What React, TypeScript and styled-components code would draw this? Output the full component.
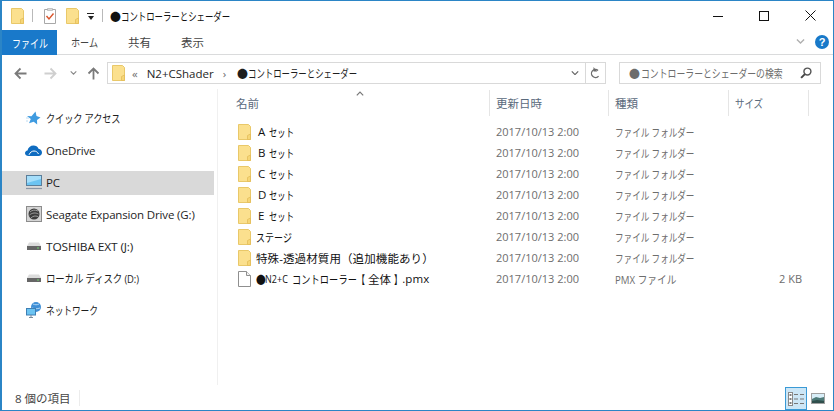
import React from "react";
import styled, { createGlobalStyle } from "styled-components";

const GlobalStyle = createGlobalStyle`
  html, body {
    margin: 0;
    padding: 0;
    background: #fff;
  }
  * {
    box-sizing: border-box;
  }
`;

const Window = styled.div`
  width: 834px;
  height: 411px;
  display: flex;
  flex-direction: column;
  overflow: hidden;
  background: #fff;
  border: 1px solid #2b85c6;
  border-left-width: 2px;
  font-family: "Open Sans", "Noto Sans CJK JP", sans-serif;
  font-size: 11.5px;
  color: #1e1e1e;
`;

// the reference font has narrow kana, so squeeze them sideways
const Squeeze = styled.span<{ $x: number; $w?: number }>`
  display: inline-block;
  flex: none;
  white-space: nowrap;
  width: ${(p) => (p.$w ? `${p.$w}px` : "auto")};
  transform: scaleX(${(p) => p.$x});
  transform-origin: left center;
`;

const TitleBar = styled.div`
  height: 29px;
  flex: none;
  display: flex;
  align-items: center;
  padding-left: 9px;
`;

const QuickAccess = styled.div`
  display: flex;
  align-items: center;
  gap: 8px;
`;

const QuickSep = styled.span`
  width: 1px;
  height: 13px;
  background: #b9b9b9;
`;

const ChecklistSlot = styled.span`
  margin: 0 2px 0 3px;
  display: flex;
`;

const DropMark = styled.span`
  width: 7px;
  height: 7px;
  margin-top: 2px;
  display: flex;
  flex-direction: column;
  align-items: center;
  &::before {
    content: "";
    width: 7px;
    height: 1px;
    background: #222;
    margin-bottom: 2px;
  }
  &::after {
    content: "";
    border-left: 3.5px solid transparent;
    border-right: 3.5px solid transparent;
    border-top: 4px solid #222;
  }
`;

const WindowTitle = styled.span`
  margin-left: 7px;
  color: #111;
`;

const WindowControls = styled.div`
  margin-left: auto;
  display: flex;
  height: 100%;
`;

const ControlButton = styled.div`
  width: 46px;
  display: flex;
  align-items: center;
  justify-content: center;
`;

const RibbonTabs = styled.div`
  height: 25px;
  flex: none;
  display: flex;
  align-items: stretch;
  border-bottom: 1px solid #dadbdc;
`;

const FileTab = styled.div`
  width: 55px;
  margin-right: 14px;
  margin-bottom: -1px;
  padding-left: 10px;
  display: flex;
  align-items: center;
  background: #1979ca;
  color: #fff;
`;

const Tab = styled.div<{ $w: number; $gap: number }>`
  width: ${(p) => p.$w}px;
  margin-right: ${(p) => p.$gap}px;
  display: flex;
  align-items: center;
  color: #444;
`;

const RibbonRight = styled.div`
  margin-left: auto;
  display: flex;
  align-items: center;
  gap: 10px;
  padding-right: 4px;
`;

const HelpBadge = styled.span`
  width: 14px;
  height: 14px;
  border-radius: 50%;
  background: #1879c9;
  color: #fff;
  font-family: "Liberation Sans", sans-serif;
  font-size: 11px;
  font-weight: 700;
  display: flex;
  align-items: center;
  justify-content: center;
`;

const AddressRow = styled.div`
  height: 34px;
  flex: none;
  display: flex;
  align-items: center;
  padding: 2px 0 0 4px;
`;

const NavButtons = styled.div`
  width: 101px;
  flex: none;
  display: flex;
  align-items: center;
`;

const NavButton = styled.span<{ $w: number }>`
  width: ${(p) => p.$w}px;
  display: flex;
  justify-content: center;
`;

const AddressBox = styled.div`
  width: 499px;
  height: 22px;
  display: flex;
  align-items: center;
  border: 1px solid #d9d9d9;
  padding-left: 4px;
`;

const Crumb = styled.span<{ $muted?: boolean; $left: number }>`
  color: ${(p) => (p.$muted ? "#6d6d6d" : "#1e1e1e")};
  margin-left: ${(p) => p.$left}px;
  white-space: nowrap;
`;

const AddressTools = styled.div`
  margin-left: auto;
  height: 100%;
  display: flex;
  align-items: center;
`;

const AddressDrop = styled.span`
  width: 20px;
  display: flex;
  justify-content: center;
`;

const RefreshButton = styled.span`
  width: 20px;
  height: 100%;
  display: flex;
  align-items: center;
  justify-content: center;
  border-left: 1px solid #d9d9d9;
`;

const SearchBox = styled.div`
  width: 202px;
  height: 22px;
  margin-left: 13px;
  display: flex;
  align-items: center;
  justify-content: space-between;
  border: 1px solid #d9d9d9;
  padding: 0 8px 0 9px;
  color: #6d6d6d;
`;

const SearchLabel = styled.span`
  display: flex;
  align-items: center;
`;

const Body = styled.div`
  flex: 1;
  min-height: 0;
  display: flex;
`;

const Sidebar = styled.nav`
  width: 216px;
  flex: none;
  padding: 18px 3px 0 0;
  border-right: 1px solid #f0f0f0;
`;

const NavItem = styled.div<{ $selected?: boolean }>`
  height: 24px;
  margin-bottom: 8px;
  padding: 0 0 2px 23px;
  display: flex;
  align-items: center;
  gap: 4px;
  background: ${(p) => (p.$selected ? "#d9d9d9" : "transparent")};
  letter-spacing: -0.15px;
  white-space: nowrap;
`;

const NavIconSlot = styled.span`
  width: 17px;
  display: flex;
  justify-content: center;
  flex: none;
`;

const FilePane = styled.main`
  flex: 1;
  min-width: 0;
  display: flex;
  flex-direction: column;
  padding-top: 1px;
`;

const columns = "272px 119px 120px 80px";

const HeaderRow = styled.div`
  position: relative;
  height: 26px;
  display: grid;
  grid-template-columns: ${columns};
  margin-bottom: 5px;
  color: #5a6a7c;
`;

const HeaderCell = styled.div<{ $first?: boolean }>`
  display: flex;
  align-items: center;
  padding-left: ${(p) => (p.$first ? "18px" : "6px")};
  border-right: 1px solid #e5e5e5;
`;

const SortCaret = styled.span`
  position: absolute;
  left: 138px;
  top: 1px;
  line-height: 0;
`;

const FileRow = styled.div`
  height: 21px;
  display: grid;
  grid-template-columns: ${columns};
  align-items: center;
`;

const NameCell = styled.div`
  display: flex;
  align-items: center;
  padding-left: 20px;
  gap: 5px;
  white-space: nowrap;
  color: #111;
  letter-spacing: 0.1px;
`;

const NameParts = styled.span`
  display: flex;
  align-items: center;
`;

const SetLetter = styled.span`
  width: 11px;
  margin-left: 2px;
`;

const NamePart = styled.span<{ $gap: number }>`
  margin-left: ${(p) => p.$gap}px;
`;

const MetaCell = styled.div<{ $right?: boolean }>`
  padding: ${(p) => (p.$right ? "0 7px 0 0" : "0 0 0 6px")};
  text-align: ${(p) => (p.$right ? "right" : "left")};
  color: #6d6d6d;
  font-size: 11px;
  white-space: nowrap;
`;

const StatusBar = styled.footer`
  height: 25px;
  flex: none;
  display: flex;
  align-items: center;
  padding-left: 13px;
  color: #444;
`;

const StatusCount = styled.span`
  width: 65px;
  border-right: 1px solid #ececec;
`;

const ViewSwitch = styled.div`
  margin-left: auto;
  height: 100%;
  padding-right: 4px;
  display: flex;
  align-items: flex-end;
`;

const ViewButton = styled.span<{ $active?: boolean }>`
  width: 22px;
  height: 23px;
  display: flex;
  align-items: center;
  justify-content: center;
  background: ${(p) => (p.$active ? "#cce6f6" : "transparent")};
  border: 1px solid ${(p) => (p.$active ? "#3a9ad6" : "transparent")};
`;

const ArrowSvg = styled.svg<{ $rotate: number }>`
  transform: rotate(${(p) => p.$rotate}deg);
`;

const FolderIcon = () => (
  <svg width="13" height="16" viewBox="0 0 13 16">
    <path d="M.5.5h10l2 2v13H.5z" fill="#fbe08e" stroke="#e9c869" />
    <path d="M9.500 15.500v-4l3-1.500v5.500z" fill="#f6d676" stroke="#e3bd5a" strokeWidth=".8" />
  </svg>
);

const FileIcon = () => (
  <svg width="13" height="16" viewBox="0 0 13 16">
    <path d="M.5.5h8l4 4v11H.5z" fill="#fff" stroke="#8f8f8f" />
    <path d="M8.500.5v4h4" fill="#f2f2f2" stroke="#8f8f8f" />
  </svg>
);

const ChecklistIcon = () => (
  <svg width="12" height="16" viewBox="0 0 12 16">
    <path d="M.5 1.500h11v14H.5z" fill="#fff" stroke="#a8a8a8" />
    <path d="M3.500.5h5v2h-5z" fill="#ddd" stroke="#a8a8a8" strokeWidth=".6" />
    <path d="M2.500 8l2.500 3L9.500 5.500" fill="none" stroke="#d9542b" strokeWidth="1.400" />
  </svg>
);

const Chevron = ({ color = "#888", w = 8, up = false }: { color?: string; w?: number; up?: boolean }) => (
  <svg width={w} height={w * 0.6} viewBox="0 0 10 6">
    <path d={up ? "M1 5.500L5 1.500l4 4" : "M1 .5l4 4 4-4"} fill="none" stroke={color} strokeWidth="1.500" />
  </svg>
);

const Arrow = ({ color, rotate = 0 }: { color: string; rotate?: number }) => (
  <ArrowSvg $rotate={rotate} width="13" height="13" viewBox="0 0 13 13">
    <path d="M12.500 6.500H2M6.500 1.500l-5 5 5 5" fill="none" stroke={color} strokeWidth="1.800" />
  </ArrowSvg>
);

const StarIcon = () => (
  <svg width="15" height="15" viewBox="0 0 15 15">
    <path d="M9.500.5l1 4.500 4 1.500-3.500 2.500.2 4.500-3.500-2.800-4.700 1.500 1.800-4.200L1 5l4.500.3z" fill="#3f9be0" />
    <path d="M0 7h3M0 10h2" stroke="#bcdcf3" />
  </svg>
);

const CloudIcon = () => (
  <svg width="17" height="11" viewBox="0 0 17 11">
    <path d="M3.500 11C1.500 11 0 9.800 0 8.200 0 6.800 1 5.800 2.500 5.500 3 2.500 5.500.5 8.500.5c2.300 0 4.200 1.200 5 3.200 2 .2 3.500 1.900 3.500 3.700 0 2-1.500 3.600-3.500 3.600z" fill="#0f6cc0" />
    <path d="M4 9.800c1-2.500 3-3.800 5-3.800s3.500 1 4.500 3" fill="none" stroke="#fff" strokeWidth="1" />
  </svg>
);

const MonitorIcon = () => (
  <svg width="16" height="15" viewBox="0 0 16 15">
    <rect x=".5" y=".5" width="15" height="10" fill="#6cc4f2" stroke="#5a7e9a" />
    <path d="M1 1h14v3L1 8z" fill="#a5defa" />
    <path d="M0 13.500h16" stroke="#8a96a6" strokeWidth="1.200" />
  </svg>
);

const SeagateIcon = () => (
  <svg width="16" height="16" viewBox="0 0 16 16">
    <rect x=".5" y=".5" width="15" height="15" fill="#d4d4d4" stroke="#8c8c8c" />
    <circle cx="8" cy="8" r="5.500" fill="#3c3c3c" />
    <path d="M4 6c2-2 5-2.500 8-1M3.500 9c3-2.500 6-2.500 9-1M5 12c2-2 4-2.500 7-1.500" fill="none" stroke="#b5b5b5" strokeWidth=".8" />
  </svg>
);

const DriveIcon = () => (
  <svg width="14" height="8" viewBox="0 0 14 8">
    <path d="M2 .5h10l2 3.500H0z" fill="#dcdcdc" />
    <rect x="0" y="4" width="14" height="4" fill="#666" />
    <rect x="10" y="5.500" width="2" height="1" fill="#6fd36f" />
  </svg>
);

const NetworkIcon = () => (
  <svg width="16" height="16" viewBox="0 0 16 16">
    <circle cx="10" cy="5" r="5" fill="#3f8fd6" />
    <path d="M7 2c2 1 4 1 6 0M6 6c3 1 5 1 8 0" stroke="#cbe6f8" strokeWidth=".8" fill="none" />
    <rect x=".5" y="6.500" width="9" height="6.500" fill="#6cc4f2" stroke="#3f7fb4" />
    <path d="M3 15.500h4M5 13v2" stroke="#7a8a9a" />
  </svg>
);

const RefreshIcon = () => (
  <svg width="11" height="12" viewBox="0 0 11 12">
    <path d="M5.500 2.500a4 4 0 1 0 4 4" fill="none" stroke="#6d6d6d" strokeWidth="1.300" transform="rotate(40 5.500 6.500)" />
    <path d="M3.500 0v4.500h3.800z" fill="#6d6d6d" />
  </svg>
);

const SearchIcon = () => (
  <svg width="12" height="12" viewBox="0 0 11 11">
    <circle cx="6.800" cy="4.200" r="3.200" fill="none" stroke="#555" strokeWidth="1.300" />
    <path d="M4.500 6.500L1 10" stroke="#444" strokeWidth="1.800" />
  </svg>
);

const DetailsViewIcon = () => (
  <svg width="16" height="14" viewBox="0 0 16 14">
    <rect x=".5" y=".5" width="4" height="13" fill="#fff" stroke="#888" />
    <path d="M1.500 3h2M1.500 7h2M1.500 11h2" stroke="#555" strokeWidth="1.500" />
    <path d="M6 2.500h4M12 2.500h4M6 7h4M12 7h4M6 11.500h4M12 11.500h4" stroke="#777" />
  </svg>
);

const PreviewViewIcon = () => (
  <svg width="14" height="11" viewBox="0 0 14 11">
    <rect x=".5" y=".5" width="13" height="10" fill="#d8eef8" stroke="#a0a0a0" />
    <path d="M1 6l4-2 4 1 4-1v6H1z" fill="#4d7a78" />
    <path d="M1 8l5-1 7 1v2H1z" fill="#2f4f4c" />
  </svg>
);

const navItems = [
  { label: "クイック アクセス", icon: <StarIcon />, x: 0.8 },
  { label: "OneDrive", icon: <CloudIcon />, x: 1 },
  { label: "PC", icon: <MonitorIcon />, x: 1, selected: true },
  { label: "Seagate Expansion Drive (G:)", icon: <SeagateIcon />, x: 1 },
  { label: "TOSHIBA EXT (J:)", icon: <DriveIcon />, x: 1.04 },
  { label: "ローカル ディスク (D:)", icon: <DriveIcon />, x: 0.82 },
  { label: "ネットワーク", icon: <NetworkIcon />, x: 0.76 },
];

const setNames = ["A", "B", "C", "D", "E"];

const FolderRow = ({ children }: { children: React.ReactNode }) => (
  <FileRow>
    <NameCell>
      <FolderIcon />
      {children}
    </NameCell>
    <MetaCell>2017/10/13 2:00</MetaCell>
    <MetaCell>
      <Squeeze $x={0.78}>ファイル フォルダー</Squeeze>
    </MetaCell>
    <MetaCell />
  </FileRow>
);

const FolderTitle = () => (
  <>
    <Squeeze $x={0.95} $w={11}>
      ●
    </Squeeze>
    <Squeeze $x={0.73}>コントローラーとシェーダー</Squeeze>
  </>
);

export default function App() {
  return (
    <>
      <GlobalStyle />
      <Window>
        <TitleBar>
          <QuickAccess>
            <FolderIcon />
            <QuickSep />
            <ChecklistSlot>
              <ChecklistIcon />
            </ChecklistSlot>
            <FolderIcon />
            <DropMark />
            <QuickSep />
          </QuickAccess>
          <WindowTitle>
            <FolderTitle />
          </WindowTitle>
          <WindowControls>
            <ControlButton>
              <svg width="10" height="10" viewBox="0 0 10 10">
                <path d="M0 5.500h10" stroke="#111" />
              </svg>
            </ControlButton>
            <ControlButton>
              <svg width="10" height="10" viewBox="0 0 10 10">
                <rect x=".5" y=".5" width="9" height="9" fill="none" stroke="#111" />
              </svg>
            </ControlButton>
            <ControlButton>
              <svg width="11" height="11" viewBox="0 0 11 11">
                <path d="M.5.5l10 10M10.500.5l-10 10" stroke="#111" />
              </svg>
            </ControlButton>
          </WindowControls>
        </TitleBar>

        <RibbonTabs>
          <FileTab>
            <Squeeze $x={0.78}>ファイル</Squeeze>
          </FileTab>
          <Tab $w={27} $gap={30}>
            <Squeeze $x={0.79}>ホーム</Squeeze>
          </Tab>
          <Tab $w={23} $gap={30}>
            共有
          </Tab>
          <Tab $w={23} $gap={0}>
            表示
          </Tab>
          <RibbonRight>
            <Chevron color="#b0b0b0" w={9} />
            <HelpBadge>?</HelpBadge>
          </RibbonRight>
        </RibbonTabs>

        <AddressRow>
          <NavButtons>
            <NavButton $w={28}>
              <Arrow color="#7a7a7a" />
            </NavButton>
            <NavButton $w={32}>
              <Arrow color="#cfcfcf" rotate={180} />
            </NavButton>
            <NavButton $w={14}>
              <Chevron w={7} />
            </NavButton>
            <NavButton $w={27}>
              <Arrow color="#7a7a7a" rotate={90} />
            </NavButton>
          </NavButtons>
          <AddressBox>
            <FolderIcon />
            <Crumb $muted $left={7}>
              «
            </Crumb>
            <Crumb $left={9}>N2+CShader</Crumb>
            <Crumb $muted $left={9}>
              ›
            </Crumb>
            <Crumb $left={11}>
              <FolderTitle />
            </Crumb>
            <AddressTools>
              <AddressDrop>
                <Chevron color="#666" w={8} />
              </AddressDrop>
              <RefreshButton>
                <RefreshIcon />
              </RefreshButton>
            </AddressTools>
          </AddressBox>
          <SearchBox>
            <SearchLabel>
              <Squeeze $x={0.95} $w={12}>
                ●
              </Squeeze>
              <Squeeze $x={0.77} $w={150}>
                コントローラーとシェーダーの検索
              </Squeeze>
            </SearchLabel>
            <SearchIcon />
          </SearchBox>
        </AddressRow>

        <Body>
          <Sidebar>
            {navItems.map((item) => (
              <NavItem key={item.label} $selected={item.selected}>
                <NavIconSlot>{item.icon}</NavIconSlot>
                <Squeeze $x={item.x}>{item.label}</Squeeze>
              </NavItem>
            ))}
          </Sidebar>
          <FilePane>
            <HeaderRow>
              <SortCaret>
                <Chevron color="#777" w={8} up />
              </SortCaret>
              <HeaderCell $first>名前</HeaderCell>
              <HeaderCell>更新日時</HeaderCell>
              <HeaderCell>種類</HeaderCell>
              <HeaderCell>
                <Squeeze $x={0.82}>サイズ</Squeeze>
              </HeaderCell>
            </HeaderRow>
            {setNames.map((letter) => (
              <FolderRow key={letter}>
                <NameParts>
                  <SetLetter>{letter}</SetLetter>
                  <Squeeze $x={0.72}>セット</Squeeze>
                </NameParts>
              </FolderRow>
            ))}
            <FolderRow>
              <Squeeze $x={0.78}>ステージ</Squeeze>
            </FolderRow>
            <FolderRow>特殊-透過材質用（追加機能あり）</FolderRow>
            <FileRow>
              <NameCell>
                <FileIcon />
                <NameParts>
                  <Squeeze $x={0.85} $w={9}>
                    ●
                  </Squeeze>
                  <Squeeze $x={0.78} $w={24}>
                    N2+C
                  </Squeeze>
                  <NamePart $gap={3}>
                    <Squeeze $x={0.8} $w={65}>
                      コントローラー
                    </Squeeze>
                  </NamePart>
                  <Squeeze $x={0.7} $w={8}>
                    【
                  </Squeeze>
                  <NamePart $gap={3}>全体</NamePart>
                  <NamePart $gap={3}>
                    <Squeeze $x={0.7} $w={8}>
                      】
                    </Squeeze>
                  </NamePart>
                  .pmx
                </NameParts>
              </NameCell>
              <MetaCell>2017/10/13 2:00</MetaCell>
              <MetaCell>
                <Squeeze $x={0.88}>PMX ファイル</Squeeze>
              </MetaCell>
              <MetaCell $right>2 KB</MetaCell>
            </FileRow>
          </FilePane>
        </Body>

        <StatusBar>
          <StatusCount>8 個の項目</StatusCount>
          <ViewSwitch>
            <ViewButton $active>
              <DetailsViewIcon />
            </ViewButton>
            <ViewButton>
              <PreviewViewIcon />
            </ViewButton>
          </ViewSwitch>
        </StatusBar>
      </Window>
    </>
  );
}
